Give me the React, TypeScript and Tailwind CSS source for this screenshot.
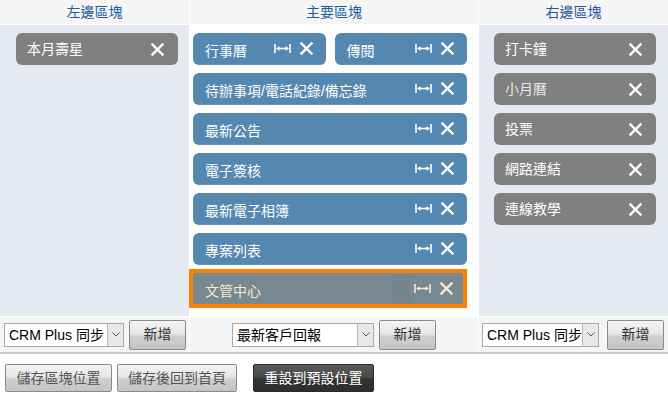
import React from "react";

const FONT = "font-['Liberation_Sans','Noto_Sans_CJK_TC',sans-serif]";

function CloseIcon({ className = "" }: { className?: string }) {
    return (
        <svg width="13" height="13" viewBox="0 0 13 13" className={className}>
            <path d="M1.5 1.5 L11.5 11.5 M11.5 1.5 L1.5 11.5" stroke="currentColor" strokeWidth="2.4" strokeLinecap="square" />
        </svg>
    );
}

function WidthIcon({ className = "" }: { className?: string }) {
    return (
        <svg width="17" height="11" viewBox="0 0 17 11" className={className}>
            <path d="M1 1 V10 M16 1 V10 M3 5.5 H14" stroke="currentColor" strokeWidth="1.6" />
            <path d="M2 5.5 L5.5 3.2 V7.8 Z M15 5.5 L11.5 3.2 V7.8 Z" fill="currentColor" />
        </svg>
    );
}

function GrayItem({ label, dim }: { label: string; dim?: boolean }) {
    return (
        <div className="h-[32px] rounded-[6px] bg-[#808080] flex items-center pl-[11px] pr-[14px]">
            <span className={`flex-1 text-[14px] ${dim ? "text-[#e8e8e8]" : "text-white"}`}>{label}</span>
            <CloseIcon className="text-white" />
        </div>
    );
}

function BlueItem({ label, className = "" }: { label: string; className?: string }) {
    return (
        <div className={`h-[32px] rounded-[6px] bg-[#5588b1] border-b border-[#7a8a99] flex items-center pl-[12px] pr-[13px] ${className}`}>
            <span className="flex-1 text-[14px] text-white pt-[6px] whitespace-nowrap">{label}</span>
            <WidthIcon className="text-white mr-[9px]" />
            <CloseIcon className="text-white" />
        </div>
    );
}

function Select({ value, w }: { value: string; w: string }) {
    return (
        <div className={`${w} h-[24px] bg-white border border-[#a9a9a9] flex items-stretch overflow-hidden`}>
            <span className="flex-1 text-[14px] text-black pl-[4px] leading-[22px] whitespace-nowrap overflow-hidden">{value}</span>
            <span className="w-[16px] bg-[#e8e8e8] border-l border-[#b8b8b8] flex items-center justify-center">
                <svg width="8" height="5" viewBox="0 0 8 5">
                    <path d="M0.5 0.5 L4 4 L7.5 0.5" stroke="#555" strokeWidth="1" fill="none" />
                </svg>
            </span>
        </div>
    );
}

function AddButton() {
    return (
        <button className="w-[57px] h-[30px] rounded-[2px] border border-[#8a8a8a] bg-[linear-gradient(#f4f4f4,#e6e6e6_45%,#cfcfcf_55%,#c4c4c4)] text-[14px] text-[#333]">
            新增
        </button>
    );
}

export default function App() {
    return (
        <div className={`${FONT} w-[668px] h-[394px] bg-white`}>
            <div className="grid grid-cols-[189px_288px_189px] gap-x-px bg-white">
                {/* headers */}
                <div className="h-[24px] bg-[#f5f5f5] text-[14px] text-[#1b5b9c] flex items-center justify-center">左邊區塊</div>
                <div className="h-[24px] bg-[#f5f5f5] text-[14px] text-[#1b5b9c] flex items-center justify-center">主要區塊</div>
                <div className="h-[24px] bg-[#f5f5f5] text-[14px] text-[#1b5b9c] flex items-center justify-center">右邊區塊</div>

                {/* bodies */}
                <div className="mt-px h-[291px] bg-[#e5eaf2] pt-[8px] pl-[16px] pr-[11px]">
                    <GrayItem label="本月壽星" />
                </div>
                <div className="mt-px h-[291px] bg-white pt-[8px] pl-[3px] pr-[11px] flex flex-col gap-[8px]">
                    <div className="flex gap-[9px]">
                        <BlueItem label="行事曆" className="flex-1" />
                        <BlueItem label="傳閱" className="flex-1" />
                    </div>
                    <BlueItem label="待辦事項/電話紀錄/備忘錄" />
                    <BlueItem label="最新公告" />
                    <BlueItem label="電子簽核" />
                    <BlueItem label="最新電子相簿" />
                    <BlueItem label="專案列表" />
                    <div className="ml-[-4px] mt-[-4px] w-[278px] h-[39px] border-4 border-[#ff7f00] bg-[#778890] flex items-center pl-[12px] pr-[10px]">
                        <span className="flex-1 text-[14px] text-[#fbe6d0] pt-[6px]">文管中心</span>
                        <span className="w-[18px] h-[27px] mr-[4px] bg-[#74858c] border-l border-[#6688a8] border-b border-b-[#8a7c6c]" />
                        <WidthIcon className="text-[#fbe6d0] mr-[9px]" />
                        <CloseIcon className="text-[#fbe6d0]" />
                    </div>
                </div>
                <div className="mt-px h-[291px] bg-[#e5eaf2] pt-[8px] pl-[15px] pr-[12px] flex flex-col gap-[8px]">
                    <GrayItem label="打卡鐘" />
                    <GrayItem label="小月曆" dim />
                    <GrayItem label="投票" />
                    <GrayItem label="網路連結" />
                    <GrayItem label="連線教學" />
                </div>

                {/* footers */}
                <div className="mt-px h-[35px] bg-[#f5f5f5] flex items-center pl-[4px] gap-[5px]">
                    <Select value="CRM Plus 同步" w="w-[120px]" />
                    <AddButton />
                </div>
                <div className="mt-px h-[35px] bg-[#f5f5f5] flex items-center justify-center gap-[5px]">
                    <Select value="最新客戶回報" w="w-[142px]" />
                    <AddButton />
                </div>
                <div className="mt-px h-[35px] bg-[#f5f5f5] flex items-center pl-[3px] gap-[8px]">
                    <Select value="CRM Plus 同步" w="w-[117px]" />
                    <AddButton />
                </div>
            </div>
            <div className="h-[2px] bg-[#c8c8c8]" />

            <div className="flex items-center pl-[5px] pt-[10px]">
                <button className="w-[107px] h-[28px] rounded-[2px] border border-[#8a8a8a] bg-[linear-gradient(#f4f4f4,#e6e6e6_45%,#cfcfcf_55%,#c4c4c4)] text-[14px] text-[#555]">
                    儲存區塊位置
                </button>
                <button className="ml-[5px] w-[120px] h-[28px] rounded-[2px] border border-[#8a8a8a] bg-[linear-gradient(#f4f4f4,#e6e6e6_45%,#cfcfcf_55%,#c4c4c4)] text-[14px] text-[#555]">
                    儲存後回到首頁
                </button>
                <button className="ml-[16px] w-[121px] h-[28px] rounded-[2px] border border-[#2a2a2a] bg-[linear-gradient(#5a5a5a,#4a4a4a_48%,#333_52%,#2e2e2e)] text-[14px] text-white">
                    重設到預設位置
                </button>
            </div>
        </div>
    );
}
